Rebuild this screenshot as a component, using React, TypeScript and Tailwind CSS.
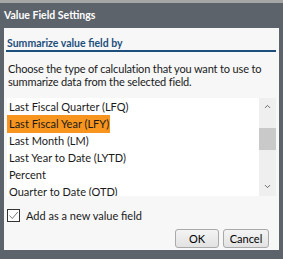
import { ChevronUp, ChevronDown } from "lucide-react";

const items = [
  "Last Fiscal Quarter (LFQ)",
  "Last Fiscal Year (LFY)",
  "Last Month (LM)",
  "Last Year to Date (LYTD)",
  "Percent",
  "Quarter to Date (QTD)",
];

export default function App() {
  return (
    <div
      className="flex h-[259px] w-[283px] flex-col bg-[#5d636b] text-[11px] text-[#1a1a1a]"
      style={{ fontFamily: 'Lato, "Noto Sans", sans-serif' }}
    >
      <div className="h-[3px] bg-[#a6a6a6]" />
      <div className="flex h-[25px] items-center px-1 text-[10.5px] font-bold text-white">
        Value Field Settings
      </div>

      <div className="mx-1 flex h-[222px] flex-col bg-[#f7f7f7] pl-[2px] pr-[3px]">
        {/* Section heading */}
        <div className="pl-[1px] pt-[9px] text-[10.5px] font-bold leading-[12px] text-[#1d4f7c]">
          Summarize value field by
        </div>
        <div className="mt-[1px] h-[1.5px] bg-[#1d4f7c]" />

        <p className="mt-[10px] whitespace-nowrap pl-[2px] leading-[13px] tracking-[-0.15px]">
          Choose the type of calculation that you want to use to
          <br />
          summarize data from the selected field.
        </p>

        {/* List */}
        <div className="ml-[1px] mt-[10px] flex h-[98px] overflow-hidden bg-white">
          <div className="flex-1 pt-[1px]">
            {items.map((item, i) => (
              <div key={item} className="flex h-[17px] items-center">
                <span
                  className={
                    i === 1
                      ? "bg-[#f7951e] py-[1px] pl-[2px] pr-[1px]"
                      : "pl-[2px]"
                  }
                >
                  {item}
                </span>
              </div>
            ))}
          </div>
          <div className="flex w-[17px] flex-col bg-[#efefef]">
            <div className="flex h-[17px] items-center justify-center">
              <ChevronUp size={9} strokeWidth={2.5} className="text-[#606060]" />
            </div>
            <div className="mt-[13px] h-[22px] bg-[#c9c9c9]" />
            <div className="flex-1" />
            <div className="mb-[1px] flex h-[17px] items-center justify-center">
              <ChevronDown size={9} strokeWidth={2.5} className="text-[#606060]" />
            </div>
          </div>
        </div>

        {/* Checkbox */}
        <label className="ml-[1px] mt-[13px] flex h-[13px] items-center gap-[6px] leading-[13px]">
          <span className="flex h-[13px] w-[13px] items-center justify-center border border-[#333] bg-white">
            <svg viewBox="0 0 11 11" className="h-[11px] w-[11px]">
              <path d="M1.5 5.5 L4.3 8.5 L9.8 2" fill="none" stroke="#7a7a7a" strokeWidth="1" />
            </svg>
          </span>
          <span>Add as a new value field</span>
        </label>

        {/* Buttons */}
        <div className="mt-[7px] flex justify-end gap-[4px] pr-[7px]">
          <button className="h-[19px] w-[44px] rounded-[3px] border border-[#a9a9a9] bg-gradient-to-b from-[#f4f4f4] to-[#e2e2e2] text-[11px] leading-none text-black">
            OK
          </button>
          <button className="h-[19px] w-[46px] rounded-[3px] border border-[#a9a9a9] bg-gradient-to-b from-[#f4f4f4] to-[#e2e2e2] text-[11px] leading-none text-black">
            Cancel
          </button>
        </div>
      </div>
    </div>
  );
}
